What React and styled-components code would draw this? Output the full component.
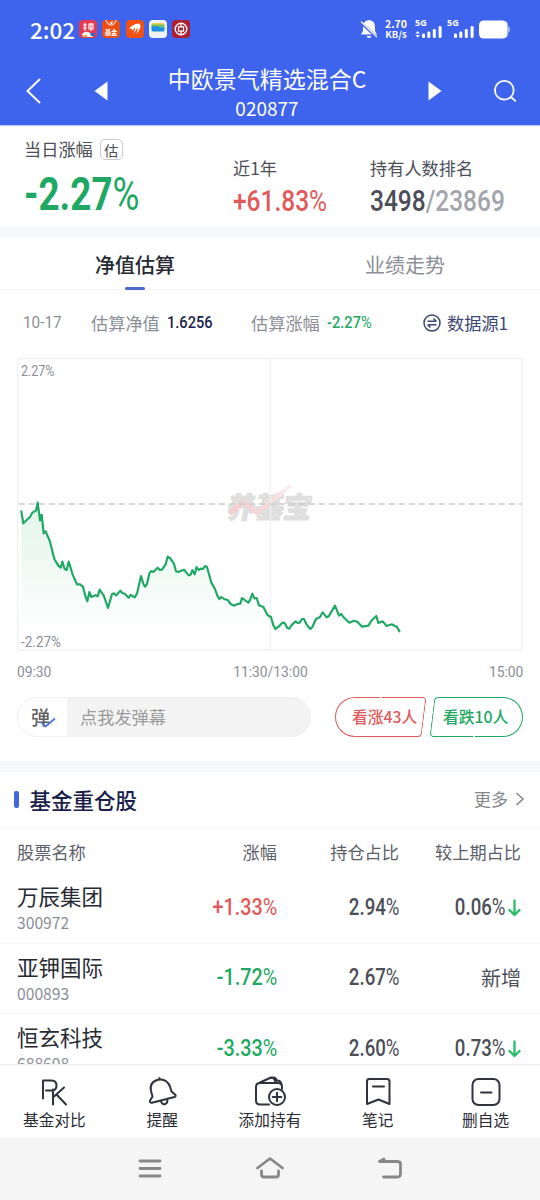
import React from "react";
import styled, { createGlobalStyle } from "styled-components";

const GlobalStyle = createGlobalStyle`
    * {
        box-sizing: border-box;
    }
    body {
        margin: 0;
        background: #fff;
        font-family: "Noto Sans CJK SC", "Noto Sans", sans-serif;
    }
`;

const colors = {
    blue: "#3e63ed",
    green: "#1fa864",
    red: "#e05a5a",
    ink: "#272a33",
    navy: "#1b1e4a",
    slate: "#4b4e58",
    grey: "#8b8e97",
};

const Screen = styled.div`
    display: flex;
    flex-direction: column;
    width: 540px;
    height: 1200px;
    overflow: hidden;
    background: #fff;
`;

/* condensed numerals */
const Digits = styled.span`
    display: inline-block;
    font-family: Roboto, "Liberation Sans", sans-serif;
    font-size: ${(p) => p.$size || 17}px;
    font-weight: ${(p) => p.$weight || 500};
    line-height: 1;
    color: ${(p) => p.$color || "inherit"};
    white-space: nowrap;
    transform: scaleX(${(p) => p.$stretch || 0.86});
    transform-origin: ${(p) => p.$origin || "left"} center;
    small {
        font-size: 1em;
        font-weight: 400;
    }
`;

function Percent({ value, ...rest }) {
    return (
        <Digits {...rest}>
            {value}
            <small>%</small>
        </Digits>
    );
}

/* ---------- header ---------- */

const Header = styled.header`
    flex: none;
    height: 126px;
    background: ${colors.blue};
    border-bottom: 1px solid #b3c8fb;
    color: #fff;
`;

const StatusBar = styled.div`
    display: flex;
    align-items: center;
    height: 58px;
    padding: 0 29px 0 30px;
`;

const Clock = styled.span`
    width: 49px;
    font-size: 22.5px;
    font-weight: 500;
    line-height: 24px;
    white-space: nowrap;
`;

const AppIcons = styled.div`
    display: flex;
    gap: 5.3px;
    flex: 1;
    svg {
        width: 18px;
        height: 18px;
    }
`;

const Speed = styled.div`
    width: 24px;
    margin: 0 7px 0 6px;
    font-size: 10.5px;
    font-weight: 700;
    line-height: 11px;
    text-align: center;
    white-space: nowrap;
    div + div {
        font-size: 9.5px;
    }
`;

const NavBar = styled.div`
    display: grid;
    grid-template-columns: 68px 66px 1fr 70px 70px;
    align-items: center;
    justify-items: center;
    height: 66px;
`;

const FundTitle = styled.div`
    text-align: center;
    h1 {
        margin: 0;
        font-size: 23px;
        font-weight: 400;
        line-height: 32px;
    }
    p {
        margin: 0;
        font-size: 19px;
        font-weight: 400;
        line-height: 27px;
    }
`;

function Signal({ arrows }) {
    return (
        <svg width="28" height="22" viewBox="0 0 28 22" fill="#fff">
            <text x="0" y="8.4" fontSize="9" fontWeight="700" fontFamily="Noto Sans">5G</text>
            {arrows && <path d="M0.5 15.6 2.7 13l2.2 2.6zM0.5 17 2.7 19.8 4.9 17z" />}
            <rect x="7" y="15.5" width="3" height="4.5" rx="1.3" />
            <rect x="12.3" y="13.5" width="3" height="6.5" rx="1.3" />
            <rect x="17.8" y="11" width="3" height="9" rx="1.3" />
            <rect x="23.6" y="8" width="3" height="12" rx="1.3" />
        </svg>
    );
}

function StatusIcons() {
    return (
        <AppIcons>
            <svg viewBox="0 0 18 18">
                <rect width="18" height="18" rx="4" fill="#e43b50" />
                <path d="M4 5h4M6 3v8M4 8h4M10 4h4v5h-4zM12 3v8" stroke="#fff" strokeWidth="1.2" fill="none" />
                <path d="M3 14q4-4 8-1l3 4H4z" fill="#fff" />
                <path d="M11 13h5v3h-4z" fill="#3c68c8" />
                <path d="M4 15h4v2H5z" fill="#f3a847" />
            </svg>
            <svg viewBox="0 0 18 18">
                <rect width="18" height="18" rx="4" fill="#ee4e16" />
                <path d="M4 0q1 5 5 5t5-5" stroke="#fbd7c8" strokeWidth="1.2" fill="none" />
                <path d="M7 3 11 1 10 4z" fill="#fff" />
                <text x="2.7" y="14.6" fontSize="6.3" fontWeight="700" fill="#fff">基金</text>
            </svg>
            <svg viewBox="0 0 18 18">
                <rect width="18" height="18" rx="4" fill="#f4500f" />
                <path d="M3 9Q6 4 13 3.500Q15 5 14.500 7Q13 11 10.500 14.500Q12 9 11.500 7.500Q10 11 7 13.500Q9.500 9 9 7.500Q7 10 5.500 11Q6.500 9 6.200 8.400Q5 8.500 3 9z" fill="#fff" />
            </svg>
            <svg viewBox="0 0 18 18">
                <rect width="18" height="18" rx="4" fill="#eef3f3" />
                <path d="M2.500 5q0-2 2-2h9q2 0 2 2z" fill="#f4cc4c" />
                <path d="M2.500 4.500h13v3h-13z" fill="#74c35b" />
                <path d="M2.500 6.300H9q1 1.200 2.500 1h4V10q0 1.500-1.500 1.500H4Q2.500 11.500 2.500 10z" fill="#1e8fdc" />
            </svg>
            <svg viewBox="0 0 18 18">
                <rect width="18" height="18" rx="4" fill="#b01f30" />
                <circle cx="9" cy="9" r="5.800" fill="none" stroke="#fff" strokeWidth="1.400" />
                <path d="M9 3.200v3.500M9 11.300v3.500M6.500 6.800h5v4.400h-5z" fill="none" stroke="#fff" strokeWidth="1.300" />
            </svg>
        </AppIcons>
    );
}

function TopHeader() {
    return (
        <Header>
            <StatusBar>
                <Clock>2:02</Clock>
                <StatusIcons />
                <svg width="18" height="20" viewBox="0 0 18 20">
                    <path d="M9 1q6 .5 6 7v4l2 3.500H1L3 12V8Q3 1.500 9 1z" fill="#fff" />
                    <path d="M6.500 17h5q-.7 2-2.500 2t-2.500-2z" fill="#fff" />
                    <path d="M.5 3 17 18.500" stroke={colors.blue} strokeWidth="3" />
                    <path d="M1 2.500 17 18" stroke="#fff" strokeWidth="1.200" />
                </svg>
                <Speed>
                    <div>2.70</div>
                    <div>KB/s</div>
                </Speed>
                <Signal arrows />
                <span style={{ width: 4 }} />
                <Signal />
                <svg width="32" height="19" viewBox="0 0 32 19" style={{ marginLeft: 4 }}>
                    <path d="M25 1q4 0 4 4v1q2 .5 2 3.500T29 13v1q0 4-4 4z" fill="#a9b9f7" />
                    <rect x="0" y=".5" width="28" height="18" rx="4.500" fill="#fff" />
                </svg>
            </StatusBar>
            <NavBar>
                <svg width="20" height="28" viewBox="0 0 20 28" fill="none" stroke="#fff" strokeWidth="2">
                    <path d="M16 2 3.500 14 16 26" />
                </svg>
                <svg width="14" height="20" viewBox="0 0 14 20" fill="#fff">
                    <path d="M13.500 .5v19L.5 10z" />
                </svg>
                <FundTitle>
                    <h1>中欧景气精选混合C</h1>
                    <p>020877</p>
                </FundTitle>
                <svg width="14" height="20" viewBox="0 0 14 20" fill="#fff">
                    <path d="M.5 .5v19L13.500 10z" />
                </svg>
                <svg width="24" height="24" viewBox="0 0 24 24" fill="none" stroke="#fff" strokeWidth="1.800">
                    <circle cx="11.300" cy="11.200" r="9.400" />
                    <path d="m18 18 4.800 4.300" />
                </svg>
            </NavBar>
        </Header>
    );
}

/* ---------- summary ---------- */

const Summary = styled.section`
    display: grid;
    grid-template-columns: 209px 137px 1fr;
    flex: none;
    height: 101px;
    padding: 9px 0 0 24px;
`;

const Stat = styled.div`
    padding-top: ${(p) => (p.$main ? 0 : 19)}px;
`;

const StatLabel = styled.div`
    display: flex;
    align-items: center;
    gap: 7px;
    height: 27px;
    margin-bottom: ${(p) => p.$gap}px;
    font-size: 17.200px;
    line-height: 27px;
    color: ${colors.slate};
`;

const EstimateTag = styled.span`
    display: flex;
    align-items: center;
    justify-content: center;
    width: 23px;
    height: 21px;
    margin-top: 2px;
    border: 1px solid #c9cacd;
    border-radius: 5px;
    font-size: 14px;
    line-height: 18px;
`;

const Gap = styled.div`
    flex: none;
    height: 11px;
    background: #f6f8fc;
`;

/* ---------- tabs and estimate line ---------- */

const Tabs = styled.nav`
    display: grid;
    grid-template-columns: 1fr 1fr;
    flex: none;
    height: 52px;
    border-bottom: 1px solid #f3f4f6;
`;

const Tab = styled.div`
    display: flex;
    flex-direction: column;
    align-items: center;
    padding-top: 12px;
    font-size: 20px;
    font-weight: ${(p) => (p.$active ? 500 : 400)};
    line-height: 30px;
    color: ${(p) => (p.$active ? colors.ink : colors.grey)};
    &::after {
        content: "";
        width: 20px;
        height: 3px;
        margin-top: 7px;
        border-radius: 2px;
        background: ${(p) => (p.$active ? "#4c66cd" : "transparent")};
    }
`;

const EstimateLine = styled.div`
    display: grid;
    grid-template-columns: 68px 160px 172px 1fr;
    align-items: center;
    flex: none;
    height: 65px;
    padding-left: 23px;
    font-size: 17.200px;
    line-height: 26px;
    color: ${colors.grey};
`;

const Field = styled.div`
    display: flex;
    align-items: center;
    gap: 7px;
`;

const Source = styled(Field)`
    gap: 6px;
    color: #3a4674;
`;

/* ---------- chart ---------- */

const ChartBox = styled.div`
    flex: none;
    position: relative;
    width: 506px;
    height: 293px;
    margin: 3px 17px 0;
    svg {
        display: block;
    }
`;

const Limit = styled.span`
    position: absolute;
    left: 4px;
    ${(p) => (p.$bottom ? "bottom: 1px" : "top: 4px")};
    line-height: 15px;
`;

const TimeAxis = styled.div`
    display: flex;
    justify-content: space-between;
    flex: none;
    height: 46px;
    padding: 14px 17px 0;
    color: ${colors.grey};
`;

// minute ticks, three units per pixel
const series =
    "13,460 19,496 29,486 39,477 46,464 57,458 62,434 69,487 74,470 80,526 86,520 99,551 112,603 124,623 131,629 136,611 143,633 149,636 155,611 167,650 180,679 189,679 198,686 205,714 211,730 217,702 223,717 235,712 242,715 248,695 260,712 273,750 285,708 291,706 298,712 310,698 316,705 323,707 335,719 341,711 353,718 360,707 372,654 379,677 384,686 390,678 397,646 403,639 409,642 422,629 428,636 435,635 446,619 452,596 458,599 471,617 477,640 483,642 501,635 515,652 521,650 526,636 533,649 539,627 545,636 551,632 558,633 564,624 570,627 583,674 594,693 601,713 607,723 613,717 621,723 632,726 641,738 650,743 662,738 670,737 675,720 694,734 700,724 706,707 712,721 719,720 726,742 739,747 752,772 762,777 769,802 775,813 786,805 796,794 803,795 811,810 817,812 825,800 836,790 842,795 848,794 855,783 861,783 869,800 880,813 886,807 897,783 909,777 917,763 929,778 935,775 954,743 966,773 973,768 979,777 997,794 1011,788 1021,791 1035,806 1054,803 1065,786 1078,774 1084,795 1097,790 1109,804 1124,799 1140,807 1147,820";

function Chart() {
    return (
        <ChartBox>
            <svg width="506" height="293" viewBox="0 0 1518 879">
                <defs>
                    <linearGradient id="area" gradientUnits="userSpaceOnUse" x1="0" y1="434" x2="0" y2="820">
                        <stop offset="0" stopColor="#1fa864" stopOpacity="0.13" />
                        <stop offset="1" stopColor="#1fa864" stopOpacity="0" />
                    </linearGradient>
                    <linearGradient id="trend" x1="0" x2="1">
                        <stop offset="0" stopColor="#f6c9cc" />
                        <stop offset="0.7" stopColor="#f9dcde" />
                        <stop offset="1" stopColor="#fdf1f2" />
                    </linearGradient>
                </defs>
                <rect x="2" y="2" width="1513" height="874" rx="8" fill="none" stroke="#f0f1f3" strokeWidth="4" />
                <text
                    x="0"
                    y="0"
                    transform="translate(626 479) skewX(-8)"
                    fontSize="87"
                    fontWeight="900"
                    fill="#dfdfdf"
                    stroke="#dfdfdf"
                    strokeWidth="3"
                    textLength="255"
                >
                    养基宝
                </text>
                <path d="M637 467 679 432 719 464 822 382" fill="none" stroke="url(#trend)" strokeWidth="13" />
                <path d="M760.500 3v873" stroke="#f0f0f5" strokeWidth="4" />
                <path d="M5 438h1510" stroke="#cbcbcb" strokeWidth="4" strokeDasharray="19 11" />
                <polygon points={`13,870 ${series} 1147,870`} fill="url(#area)" />
                <polyline points={series} fill="none" stroke={colors.green} strokeWidth="6.500" strokeLinejoin="round" strokeLinecap="round" />
            </svg>
            <Limit>
                <Percent value="2.27" $size={14.5} $weight={400} $color={colors.grey} $stretch={0.86} />
            </Limit>
            <Limit $bottom>
                <Percent value="-2.27" $size={15} $weight={400} $color={colors.grey} $stretch={0.9} />
            </Limit>
        </ChartBox>
    );
}

/* ---------- comments and votes ---------- */

const VoteRow = styled.div`
    display: flex;
    flex: none;
    height: 40px;
    margin-bottom: 24px;
    padding: 0 17px;
`;

const CommentBox = styled.div`
    display: flex;
    width: 294px;
    margin-right: 24px;
    border: 1px solid #efefef;
    border-radius: 20px;
    background: #f3f3f3;
    overflow: hidden;
    font-size: 17.200px;
    line-height: 38px;
    color: #9a9a9a;
`;

const CommentToggle = styled.div`
    position: relative;
    width: 49px;
    margin-right: 13px;
    padding-left: 13px;
    background: #fff;
    font-size: 19px;
    font-weight: 500;
    color: #606060;
    svg {
        position: absolute;
        left: 21px;
        top: 19px;
    }
`;

const Vote = styled.div`
    position: relative;
    width: ${(p) => (p.$up ? 89 : 94)}px;
    margin-left: ${(p) => (p.$up ? 0 : 5)}px;
    padding-left: ${(p) => (p.$up ? 17 : 14)}px;
    font-size: 15.800px;
    font-weight: 500;
    line-height: 40px;
    white-space: nowrap;
    color: ${(p) => (p.$up ? colors.red : colors.green)};
    &::before,
    &::after {
        content: "";
        position: absolute;
        top: 0;
        bottom: 0;
        border: 1.500px solid currentColor;
    }
    &::before {
        left: 0;
        right: 50%;
        border-right: 0;
        ${(p) => (p.$up ? "border-radius: 20px 0 0 20px" : "border-radius: 4px 0 0 4px; left: 3px; transform: skewX(-7deg)")};
    }
    &::after {
        left: 49%;
        right: 0;
        border-left: 0;
        ${(p) => (p.$up ? "border-radius: 0 4px 4px 0; transform: skewX(-7deg)" : "border-radius: 0 20px 20px 0")};
    }
`;

/* ---------- holdings ---------- */

const SectionHead = styled.div`
    display: flex;
    align-items: center;
    flex: none;
    height: 56px;
    padding: 1px 15px 0 14px;
    border-bottom: 1px solid #f7f7f9;
    &::before {
        content: "";
        width: 4.500px;
        height: 17px;
        margin: -2px 11px 0 0;
        border-radius: 2px;
        background: #4466dc;
    }
    h2 {
        flex: 1;
        margin: 0;
        font-size: 21.500px;
        font-weight: 500;
        line-height: 30px;
        color: ${colors.navy};
    }
`;

const More = styled.span`
    display: flex;
    align-items: center;
    gap: 7px;
    margin-top: -3px;
    font-size: 17px;
    line-height: 26px;
    color: #85868a;
`;

const Grid = styled.div`
    display: grid;
    grid-template-columns: 140px 120px 122px 122px;
    align-items: center;
    padding: 0 17px;
    text-align: right;
`;

const TableHead = styled(Grid)`
    flex: none;
    height: 45px;
    padding-top: 2px;
    font-size: 17.200px;
    line-height: 26px;
    color: #5c5f69;
    span:first-child {
        text-align: left;
    }
`;

const Holdings = styled.div`
    flex: 1;
    min-height: 0;
    overflow: hidden;
`;

const StockRow = styled(Grid)`
    height: 70.500px;
    border-bottom: 1px solid #f3f4f6;
`;

const Stock = styled.div`
    text-align: left;
    strong {
        display: block;
        font-size: 21.500px;
        font-weight: 400;
        line-height: 30px;
        color: ${colors.ink};
    }
    span {
        display: block;
        font-size: 15.700px;
        line-height: 23px;
        color: ${colors.grey};
    }
`;

const Change = styled.div`
    display: flex;
    align-items: center;
    justify-content: flex-end;
    gap: 3px;
    font-size: 20px;
    line-height: 30px;
    color: ${colors.slate};
`;

const stocks = [
    { name: "万辰集团", code: "300972", change: "+1.33", share: "2.94", diff: "0.06" },
    { name: "亚钾国际", code: "000893", change: "-1.72", share: "2.67" },
    { name: "恒玄科技", code: "688608", change: "-3.33", share: "2.60", diff: "0.73" },
];

function DownArrow() {
    return (
        <svg width="13" height="18" viewBox="0 0 13 18" fill="none" stroke="#27bd68" strokeWidth="2.300" strokeLinecap="round" strokeLinejoin="round">
            <path d="M6.500 1.500v14.500M1.500 11l5 5 5-5" />
        </svg>
    );
}

/* ---------- bottom bars ---------- */

const ActionBar = styled.nav`
    display: grid;
    grid-template-columns: repeat(5, 1fr);
    flex: none;
    height: 73px;
    padding: 0 0.500px;
    border-top: 1px solid #ececee;
    background: #fff;
`;

const Action = styled.div`
    display: flex;
    flex-direction: column;
    align-items: center;
    padding-top: 8px;
    font-size: 15.700px;
    line-height: 24px;
    color: ${colors.ink};
    svg {
        width: 34px;
        height: 34px;
        margin-bottom: 1px;
        fill: none;
        stroke: #30333b;
        stroke-width: 2;
        stroke-linecap: round;
        stroke-linejoin: round;
    }
`;

const SystemBar = styled.div`
    display: flex;
    justify-content: center;
    align-items: center;
    gap: 90px;
    flex: none;
    height: 63px;
    background: #f5f5f5;
    svg {
        width: 30px;
        height: 26px;
        fill: none;
        stroke: #888;
        stroke-width: 2.800;
        stroke-linecap: round;
        stroke-linejoin: round;
    }
`;

const actions = [
    {
        label: "基金对比",
        icon: <path d="M6 26V8h8.500q5 0 5 5t-5 5H9M16 17v15M27 15 16.500 24.500M19.500 22 29 32" transform="translate(0 -.5)" />,
    },
    {
        label: "提醒",
        icon: (
            <>
                <path d="M5 27.500 7.500 23.500 6 18Q4 9 13 6.700 21.500 5 25 13.500L26.500 18.500 30.500 22Q31 23.500 29.500 24L7 29.800Q4.500 30 5 27.500z" />
                <path d="M14.500 6V5M16 28.500q1.300 3.500 4.300 2.500 2.500-1 2-4" />
            </>
        ),
    },
    {
        label: "添加持有",
        icon: (
            <>
                <path d="M16 31.500H7Q3 31.500 3 27.500V14Q3 10 7 10H25Q29 10 29 14V16" />
                <path d="M7 9.500 18 4.500Q20 4 21 6L23 9.500M18 5q4-1.500 6 2.500 4 0 4.500 4" />
                <circle cx="24" cy="24" r="8" fill="#fff" />
                <path d="M24 19.700v8.600M19.700 24h8.600" />
            </>
        ),
    },
    {
        label: "笔记",
        icon: <path d="M8 6H26Q28.500 6 28.500 8.500V31L17.500 26.500 6 31V8.500Q6 6 8 6zM12 13.500h11" />,
    },
    {
        label: "删自选",
        icon: (
            <>
                <rect x="3.500" y="6" width="27" height="26" rx="6" />
                <path d="M12 19.500h10.500" />
            </>
        ),
    },
];

export default function App() {
    return (
        <Screen>
            <GlobalStyle />
            <TopHeader />
            <Summary>
                <Stat $main>
                    <StatLabel $gap={9}>
                        当日涨幅 <EstimateTag>估</EstimateTag>
                    </StatLabel>
                    <Percent value="-2.27" $size={46} $weight={700} $color={colors.green} $stretch={0.8} />
                </Stat>
                <Stat>
                    <StatLabel $gap={6}>近1年</StatLabel>
                    <Percent value="+61.83" $size={29.5} $color={colors.red} $stretch={0.83} />
                </Stat>
                <Stat>
                    <StatLabel $gap={6}>持有人数排名</StatLabel>
                    <Digits $size={29.5} $color="#a4a5ac" $stretch={0.83}>
                        <span style={{ color: colors.slate }}>3498</span>/23869
                    </Digits>
                </Stat>
            </Summary>
            <Gap />
            <Tabs>
                <Tab $active>净值估算</Tab>
                <Tab>业绩走势</Tab>
            </Tabs>
            <EstimateLine>
                <Digits $stretch={0.9} $weight={400}>10-17</Digits>
                <Field>
                    估算净值 <Digits $color={colors.navy}>1.6256</Digits>
                </Field>
                <Field>
                    估算涨幅 <Percent value="-2.27" $color={colors.green} />
                </Field>
                <Source>
                    <svg width="18" height="18" viewBox="0 0 18 18" fill="none" stroke="#3a4674" strokeWidth="1.500">
                        <circle cx="9" cy="9" r="8" />
                        <path d="M4.500 7.300h8.800M10.500 4.500l2.800 2.800M13.500 10.700H4.700M7.500 13.500l-2.800-2.800" />
                    </svg>
                    数据源1
                </Source>
            </EstimateLine>
            <Chart />
            <TimeAxis>
                <Digits $size={15} $weight={400} $stretch={0.92}>09:30</Digits>
                <Digits $size={15} $weight={400} $stretch={0.92} $origin="center">11:30/13:00</Digits>
                <Digits $size={15} $weight={400} $stretch={0.92} $origin="right">15:00</Digits>
            </TimeAxis>
            <VoteRow>
                <CommentBox>
                    <CommentToggle>
                        弹
                        <svg width="18" height="12" viewBox="0 0 18 12" fill="none" stroke="#4d72d8" strokeWidth="1.700">
                            <path d="M2 5 6.500 9.500 16 1.500" />
                        </svg>
                    </CommentToggle>
                    点我发弹幕
                </CommentBox>
                <Vote $up>看涨43人</Vote>
                <Vote>看跌10人</Vote>
            </VoteRow>
            <Gap />
            <SectionHead>
                <h2>基金重仓股</h2>
                <More>
                    更多
                    <svg width="10" height="14" viewBox="0 0 10 14" fill="none" stroke="#85868a" strokeWidth="1.600">
                        <path d="m1.500 1 6.500 6-6.500 6" />
                    </svg>
                </More>
            </SectionHead>
            <TableHead>
                <span>股票名称</span>
                <span>涨幅</span>
                <span>持仓占比</span>
                <span>较上期占比</span>
            </TableHead>
            <Holdings>
                {stocks.map((s) => (
                    <StockRow key={s.code}>
                        <Stock>
                            <strong>{s.name}</strong>
                            <span>{s.code}</span>
                        </Stock>
                        <div>
                            <Percent
                                value={s.change}
                                $size={23}
                                $origin="right"
                                $color={s.change[0] === "+" ? colors.red : colors.green}
                            />
                        </div>
                        <div>
                            <Percent value={s.share} $size={23} $origin="right" $stretch={0.81} $color={colors.slate} />
                        </div>
                        <Change>
                            {s.diff ? (
                                <>
                                    <Percent value={s.diff} $size={23} $origin="right" $stretch={0.81} />
                                    <DownArrow />
                                </>
                            ) : (
                                "新增"
                            )}
                        </Change>
                    </StockRow>
                ))}
            </Holdings>
            <ActionBar>
                {actions.map((a) => (
                    <Action key={a.label}>
                        <svg viewBox="0 0 34 34">{a.icon}</svg>
                        {a.label}
                    </Action>
                ))}
            </ActionBar>
            <SystemBar>
                <svg viewBox="0 0 30 26">
                    <path d="M5 5h20M5 12.500h20M5 20h20" />
                </svg>
                <svg viewBox="0 0 30 26">
                    <path d="M2.500 12 15 2.500 27.500 12M6.500 15v3.500q0 2.500 2.500 2.500h12q2.500 0 2.500-2.500V15" />
                </svg>
                <svg viewBox="0 0 30 26">
                    <path d="M9 3 4.500 5.500H22q3.500 0 3.500 2.500v10q0 3-3 3H8.500" />
                </svg>
            </SystemBar>
        </Screen>
    );
}
